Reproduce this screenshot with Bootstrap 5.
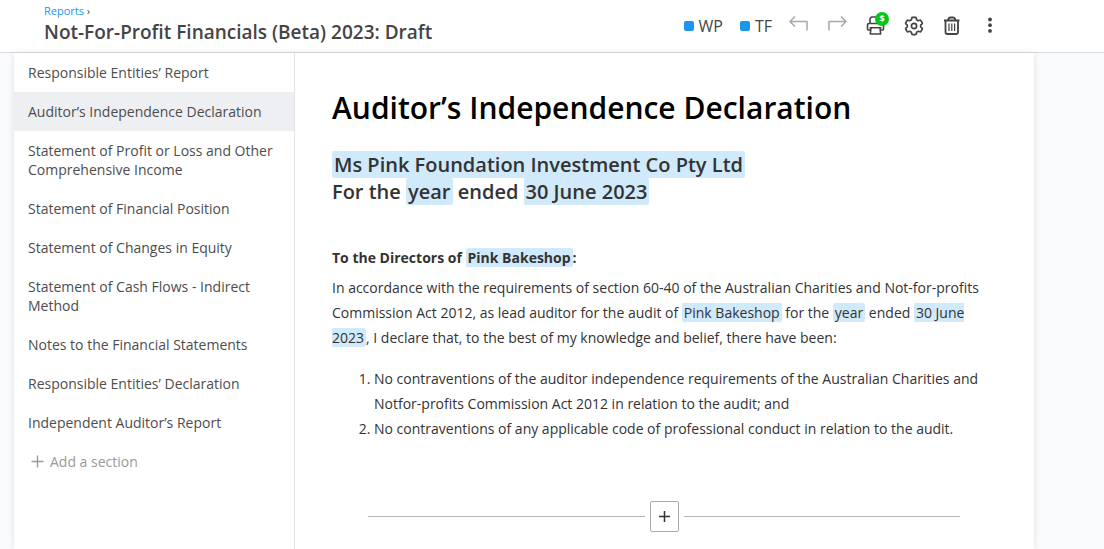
<!DOCTYPE html>
<html lang="en">
<head>
<meta charset="utf-8">
<meta name="viewport" content="width=device-width, initial-scale=1">
<title>Not-For-Profit Financials (Beta) 2023: Draft</title>
<link href="https://cdn.jsdelivr.net/npm/bootstrap@5.3.0/dist/css/bootstrap.min.css" rel="stylesheet">
<style>
body { font-family: "Open Sans", "Noto Sans", sans-serif; font-size: 14px; line-height: 25px; color: #333; background: #f8fafc; }
.topbar { background: #fff; border-bottom: 1px solid #dcdcdc; padding: 2px 103px 7px 44px; }
.crumb { font-size: 11px; line-height: 18px; color: #444; }
.crumb a { color: #1a96ec; }
.doc-title { font-size: 19px; line-height: 25px; font-weight: 600; color: #444; }
.tools { gap: 16px; padding-top: 4px; font-size: 16px; color: #444; }
.tools .btn { --bs-btn-padding-x: 0; --bs-btn-padding-y: 0; --bs-btn-border-width: 0; --bs-btn-color: #444; --bs-btn-font-size: 16px; --bs-btn-line-height: 22px; }
.tools .btn.dim { --bs-btn-color: #a8a8a8; }
.tools .btn.app { gap: 5px; padding-right: 1px; }
.tools svg, .add-link svg, .add-btn svg { display: block; }
.swatch { width: 10px; height: 10px; border-radius: 2px; background: #1a96ec; }
.paid { top: -3px; right: -2px; width: 14px; height: 14px; border-radius: 50%; background: #00c814; color: #fff; font-size: 9px; line-height: 14px; font-weight: 700; }
.sheet { max-width: 1020px; margin-left: 14px; background: #fff; box-shadow: 0 0 6px rgba(40, 50, 70, .12); }
.sections { flex: 0 0 281px; border-right: 1px solid #e4e4e4; }
.sections a, .add-link { display: block; padding: 10px 14px; line-height: 19px; color: #4d4d4d; text-decoration: none; }
.sections a.active { background: #eeeff3; }
.sections .add-link { display: flex; align-items: center; gap: 6px; width: 100%; padding-left: 17px; border: 0; background: none; color: #999; }
.report { padding: 34px 55px 16px 37px; }
.report h2 { font-size: 30px; line-height: 42px; font-weight: 600; color: #000; margin-bottom: 22px; }
.report h3 { font-size: 20px; line-height: 27px; font-weight: 600; margin-bottom: 40px; }
.report h4 { font-size: 14px; line-height: 25px; font-weight: 700; margin-bottom: 5px; }
.report p { margin-bottom: 16px; }
.report ol { padding-left: 42px; margin-bottom: 60px; }
.field { background: #d0e9fb; border-radius: 2px; padding: 0 2px; }
.divider { margin: 0 19px 0 36px; gap: 5px; }
.divider hr { margin: 0; border-color: #999; opacity: .75; }
.add-btn { width: 29px; height: 31px; border: 1px solid #aaa; border-radius: 2px; background: #fff; color: #333; }
</style>
</head>
<body class="d-flex flex-column min-vh-100">
<header class="topbar d-flex align-items-center justify-content-between">
  <div>
    <nav class="crumb" aria-label="Breadcrumb"><a href="#" class="text-decoration-none">Reports</a> ›</nav>
    <h1 class="doc-title mb-0">Not-For-Profit Financials (Beta) 2023: Draft</h1>
  </div>
  <div class="tools d-flex align-items-center">
    <button type="button" class="btn app d-flex align-items-center"><span class="swatch"></span>WP</button>
    <button type="button" class="btn app d-flex align-items-center"><span class="swatch"></span>TF</button>
    <button type="button" class="btn dim" aria-label="Undo"><svg width="22" height="22" viewBox="0 0 22 22" fill="none" stroke="currentColor" stroke-width="1.500"><path d="M6 1.500 1 6.500l5 5M1 6.500h17v9"/></svg></button>
    <button type="button" class="btn dim" aria-label="Redo"><svg width="22" height="22" viewBox="0 0 22 22" fill="none" stroke="currentColor" stroke-width="1.500"><path d="M14 1.500 19 6.500l-5 5M19 6.500H2v9"/></svg></button>
    <button type="button" class="btn position-relative" aria-label="Print"><svg width="22" height="22" viewBox="0 0 22 22" fill="none" stroke="currentColor" stroke-width="1.600" stroke-linejoin="round"><path d="M5 8V3.500L6.500 2H14l2 2v4M5 15H3.500Q2.500 15 2.500 14v-4Q2.500 8.500 4 8.500h13Q18.500 8.500 18.500 10v4q0 1-1 1H16M4.500 12.800h12M6 13l-.7 6h10.400l-.7-6"/></svg><span class="paid position-absolute text-center">$</span></button>
    <button type="button" class="btn" aria-label="Settings"><svg width="22" height="22" viewBox="0 0 22 22" fill="none" stroke="currentColor" stroke-width="1.700" stroke-linejoin="round"><path d="M9.500 2.300h3q.6 0 .7.700l.4 1.800 1.600.9 1.700-.5q.7-.2 1 .4l1.300 2.200q.4.6-.1 1.100l-1.400 1.200v1.800l1.400 1.200q.5.500.1 1.100l-1.300 2.200q-.3.600-1 .4l-1.700-.5-1.600.9-.4 1.800q-.1.700-.7.700h-3q-.6 0-.7-.7l-.4-1.800-1.600-.9-1.700.5q-.7.200-1-.4l-1.300-2.200q-.4-.6.100-1.100l1.400-1.200v-1.800L2.900 8.900q-.5-.5-.1-1.100l1.300-2.200q.3-.6 1-.4l1.700.5 1.600-.9.400-1.800q.1-.7.700-.7z"/><circle cx="11" cy="11" r="2.600"/></svg></button>
    <button type="button" class="btn" aria-label="Delete"><svg width="22" height="22" viewBox="0 0 22 22" fill="none" stroke="currentColor" stroke-width="1.800" stroke-linejoin="round"><path d="M3 5.500h15.500M7 5.500Q7.500 2.500 9.500 2.500h2.500q2 0 2.500 3M4.500 5.500v11.500q0 2 2 2h8.500q2 0 2-2v-11.500"/><path stroke-width="1.200" d="M8 8.500v7.500M10.800 8.500v7.500M13.600 8.500v7.500"/></svg></button>
    <button type="button" class="btn" aria-label="More"><svg width="22" height="22" viewBox="0 0 22 22" fill="currentColor"><circle cx="11" cy="4.500" r="1.900"/><circle cx="11" cy="10.200" r="1.900"/><circle cx="11" cy="15.900" r="1.900"/></svg></button>
  </div>
</header>
<main class="sheet d-flex flex-grow-1">
  <nav class="sections" aria-label="Report sections">
    <a href="#">Responsible Entities’ Report</a>
    <a href="#" class="active" aria-current="page">Auditor’s Independence Declaration</a>
    <a href="#">Statement of Profit or Loss and Other Comprehensive Income</a>
    <a href="#">Statement of Financial Position</a>
    <a href="#">Statement of Changes in Equity</a>
    <a href="#">Statement of Cash Flows - Indirect Method</a>
    <a href="#">Notes to the Financial Statements</a>
    <a href="#">Responsible Entities’ Declaration</a>
    <a href="#">Independent Auditor’s Report</a>
    <button type="button" class="add-link"><svg width="13" height="13" viewBox="0 0 13 13" stroke="currentColor" stroke-width="1.400"><path d="M6.500.5v12M.5 6.500h12"/></svg>Add a section</button>
  </nav>
  <article class="report flex-grow-1">
    <h2>Auditor’s Independence Declaration</h2>
    <h3><span class="field">Ms Pink Foundation Investment Co Pty Ltd</span><br>For the <span class="field">year</span> ended <span class="field">30 June 2023</span></h3>
    <h4>To the Directors of <span class="field">Pink Bakeshop</span>:</h4>
    <p>In accordance with the requirements of section 60-40 of the Australian Charities and Not-for-profits Commission Act 2012, as lead auditor for the audit of <span class="field">Pink Bakeshop</span> for the <span class="field">year</span> ended <span class="field">30 June 2023</span>, I declare that, to the best of my knowledge and belief, there have been:</p>
    <ol>
      <li>No contraventions of the auditor independence requirements of the Australian Charities and Notfor-profits Commission Act 2012 in relation to the audit; and</li>
      <li>No contraventions of any applicable code of professional conduct in relation to the audit.</li>
    </ol>
    <div class="divider d-flex align-items-center">
      <hr class="flex-grow-1">
      <button type="button" class="add-btn d-flex align-items-center justify-content-center p-0" aria-label="Add content"><svg width="13" height="13" viewBox="0 0 13 13" stroke="currentColor" stroke-width="1.500"><path d="M6.500 1v11M1 6.500h11"/></svg></button>
      <hr class="flex-grow-1">
    </div>
  </article>
</main>
<script src="https://cdn.jsdelivr.net/npm/bootstrap@5.3.0/dist/js/bootstrap.bundle.min.js"></script>
</body>
</html>
